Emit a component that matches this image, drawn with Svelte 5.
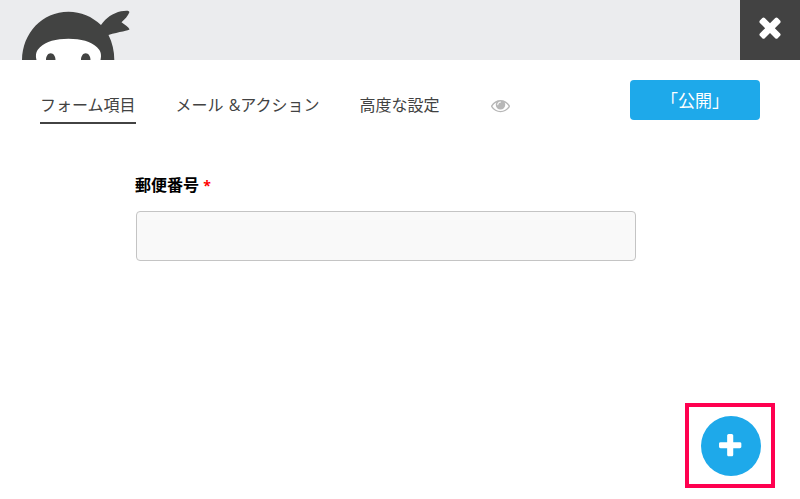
<script lang="ts">
	let activeTab = $state(0);
	let postcode = $state('');

	const tabs = ['フォーム項目', 'メール &アクション', '高度な設定'];
</script>

<div class="builder">
	<header class="topbar">
		<svg class="logo" width="130" height="60" viewBox="0 0 130 60" aria-hidden="true">
			<path
				fill="#424342"
				d="M22 60C22.500 33 42 11.700 68.500 11.700C81 11.700 92 16.500 101 25C106 18 113 13 121 11.300C126 10.300 130 10.300 129.300 12.500C128 16 124.500 19.500 121.500 22.200C124.500 24.500 128.500 27 129.500 29.200C129.500 30.700 119 31.500 108.500 35C112.300 42.500 114.300 51 114.300 60Z"
			/>
			<path
				fill="#fff"
				d="M36.500 60C35.300 55 36 51 40 47.300C46 41.500 56 38.800 68.500 38.800C81 38.800 91 41.500 97 47.300C101 51 101.700 55 100.500 60Z"
			/>
			<path
				fill="#424342"
				d="M46 60C46 56 48 53.200 50.700 53.200S55.500 56 55.500 60ZM81 60C81 56 83 53.200 85.700 53.200S90.500 56 90.500 60Z"
			/>
		</svg>
		<button class="close" type="button" aria-label="Close">
			<svg width="32" height="32" viewBox="0 0 1792 1792">
				<path
					fill="currentColor"
					d="M1490 1322q0 40-28 68l-136 136q-28 28-68 28t-68-28l-294-294-294 294q-28 28-68 28t-68-28l-136-136q-28-28-28-68t28-68l294-294-294-294q-28-28-28-68t28-68l136-136q28-28 68-28t68 28l294 294 294-294q28-28 68-28t68 28l136 136q28 28 28 68t-28 68l-294 294 294 294q28 28 28 68z"
				/>
			</svg>
		</button>
	</header>

	<nav class="menu">
		{#each tabs as tab, i}
			<button class="tab" class:active={activeTab === i} type="button" onclick={() => (activeTab = i)}>
				{tab}
			</button>
		{/each}
		<button class="preview" type="button" aria-label="Preview">
			<svg width="19" height="19" viewBox="0 0 1792 1792">
				<path
					fill="currentColor"
					d="M1664 960q-152-236-381-353 61 104 61 225 0 185-131.500 316.500t-316.500 131.500-316.500-131.500-131.500-316.500q0-121 61-225-229 117-381 353 133 205 333.500 326.500t434.500 121.500 434.500-121.500 333.500-326.500zm-720-384q0-20-14-34t-34-14q-125 0-214.500 89.500t-89.500 214.500q0 20 14 34t34 14 34-14 14-34q0-86 61-147t147-61q20 0 34-14t14-34zm848 384q0 34-20 69-140 230-376.500 368.500t-499.500 138.500-499.500-139-376.500-368q-20-35-20-69t20-69q140-229 376.500-368t499.500-139 499.500 139 376.500 368q20 35 20 69z"
				/>
			</svg>
		</button>
		<button class="publish" type="button">「公開」</button>
	</nav>

	<main class="fields">
		<label for="postcode">郵便番号 <span class="required">*</span></label>
		<input id="postcode" type="text" bind:value={postcode} />
	</main>

	<footer class="actions">
		<div class="highlight">
			<button class="add" type="button" aria-label="Add field">
				<svg width="28.400" height="28.400" viewBox="0 0 1792 1792">
					<path
						fill="currentColor"
						d="M1600 736v192q0 40-28 68t-68 28h-416v416q0 40-28 68t-68 28h-192q-40 0-68-28t-28-68v-416h-416q-40 0-68-28t-28-68v-192q0-40 28-68t68-28h416v-416q0-40 28-68t68-28h192q40 0 68 28t28 68v416h416q40 0 68 28t28 68z"
					/>
				</svg>
			</button>
		</div>
	</footer>
</div>

<style>
	:global(body) {
		background: #fff;
	}

	.builder {
		display: flex;
		flex-direction: column;
		box-sizing: border-box;
		width: 800px;
		height: 499px;
		overflow: hidden;
		font-family: 'Open Sans', 'Noto Sans CJK JP', sans-serif;
		font-size: 16px;
		color: #424242;
	}

	button {
		padding: 0;
		border: none;
		background: none;
		font: inherit;
		color: inherit;
		cursor: pointer;
	}

	svg {
		display: block;
	}

	.topbar {
		display: flex;
		justify-content: space-between;
		height: 60px;
		background: #ebecee;
	}

	.close {
		display: flex;
		justify-content: center;
		width: 60px;
		padding-top: 11px;
		background: #424242;
		color: #fff;
	}

	.menu {
		display: flex;
		align-items: flex-start;
		gap: 40px;
		padding: 20px 40px 0;
	}

	.tab {
		box-sizing: border-box;
		height: 44px;
		padding: 10px 0 2px;
		border-bottom: 2px solid transparent;
		line-height: 30px;
		font-weight: 390;
		word-spacing: 1px;
		white-space: nowrap;
	}

	.tab.active {
		border-bottom-color: #424242;
	}

	.preview {
		margin: 16px 0 0 11px;
		color: #b7b7b7;
	}

	.publish {
		width: 130px;
		height: 40px;
		margin-left: auto;
		padding-top: 1px;
		border-radius: 4px;
		background: #1ea9ea;
		color: #fff;
		font-size: 17px;
		line-height: 39px;
	}

	.fields {
		display: flex;
		flex-direction: column;
		width: 500px;
		padding: 49px 0 0 136px;
	}

	.fields label {
		height: 38px;
		margin-left: -1px;
		line-height: 24px;
		font-weight: 700;
		color: #000;
	}

	.required {
		font-size: 14px;
		color: #f00;
	}

	.fields input {
		box-sizing: border-box;
		height: 50px;
		padding: 12px;
		border: 1px solid #c4c4c4;
		border-radius: 4px;
		background: #f9f9f9;
		font: inherit;
	}

	.actions {
		display: flex;
		justify-content: flex-end;
		margin-top: auto;
		padding: 0 25px 11px;
	}

	.highlight {
		box-sizing: border-box;
		width: 90px;
		height: 85px;
		padding: 9px 0 0 12px;
		border: 4px solid #ff0050;
	}

	.add {
		display: flex;
		justify-content: center;
		width: 60px;
		height: 60px;
		padding: 16px 2px 0 0;
		border-radius: 50%;
		background: #1ea9ea;
		color: #fff;
	}
</style>
